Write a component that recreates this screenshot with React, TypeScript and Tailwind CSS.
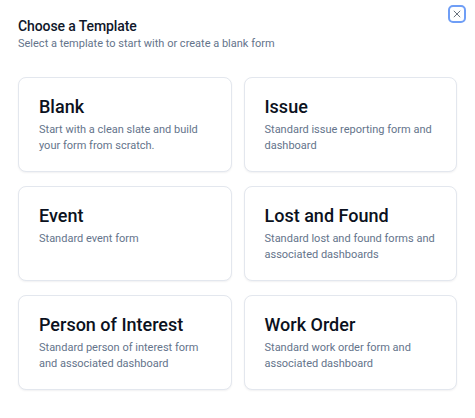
import React from "react";

const templates = [
  { title: "Blank", desc: "Start with a clean slate and build your form from scratch." },
  { title: "Issue", desc: "Standard issue reporting form and dashboard" },
  { title: "Event", desc: "Standard event form" },
  { title: "Lost and Found", desc: "Standard lost and found forms and associated dashboards" },
  { title: "Person of Interest", desc: "Standard person of interest form and associated dashboard" },
  { title: "Work Order", desc: "Standard work order form and associated dashboard" },
];

export default function App() {
  return (
    <div className="relative h-[418px] w-[475px] bg-white px-[18px] pt-[16px] font-['Roboto',sans-serif] text-[#0f172a]">
      <button
        type="button"
        aria-label="Close"
        className="absolute right-[9px] top-[5px] flex h-[18px] w-[18px] items-center justify-center rounded-[5px] border-2 border-[#6f9ef6] bg-white text-[#4b5563]"
      >
        <svg width="10" height="10" viewBox="0 0 24 24" fill="none" stroke="currentColor" strokeWidth="2" strokeLinecap="round">
          <path d="M19 5 5 19" />
          <path d="m5 5 14 14" />
        </svg>
      </button>
      <h2 className="text-[14px] font-medium leading-[20px] tracking-[-0.1px]">Choose a Template</h2>
      <p className="text-[11px] leading-[16px] text-[#64748b]">Select a template to start with or create a blank form</p>
      <div className="mt-[25px] grid grid-cols-2 gap-x-3 gap-y-[14px]">
        {templates.map((t) => (
          <div
            key={t.title}
            className="h-[95px] rounded-lg border border-[#e3e7ee] bg-white pl-[20px] pr-[16px] pt-[17px] shadow-[0_1px_2px_rgba(15,23,42,0.06)]"
          >
            <div className="text-[18px] font-medium leading-[24px] text-[#0b1120]">{t.title}</div>
            <div className="mt-[3px] text-[11px] leading-[16px] text-[#64748b]">{t.desc}</div>
          </div>
        ))}
      </div>
    </div>
  );
}
